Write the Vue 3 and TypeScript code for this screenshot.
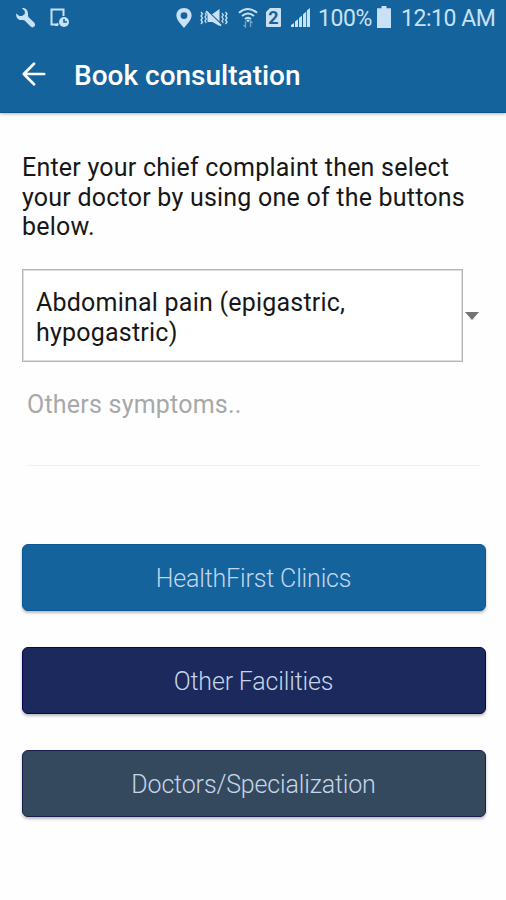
<script setup lang="ts">
import { ref } from 'vue'

interface Destination {
  label: string
  tone: string
}

const complaint = ref('Abdominal pain (epigastric, hypogastric)')
const symptoms = ref('')
const destinations: Destination[] = [
  { label: 'HealthFirst Clinics', tone: 'blue' },
  { label: 'Other Facilities', tone: 'navy' },
  { label: 'Doctors/Specialization', tone: 'slate' },
]
</script>

<template>
  <div class="screen">
    <header class="top">
      <div class="status">
        <svg class="wrench" width="22" height="22" viewBox="0 0 22 22">
          <path d="M6.8 1 9.8 4V7L7 9H4.4L1.2 6.4C.6 10.4 3.4 13.6 7.4 13Q8.6 12.8 9.6 13.4L15.6 19.6Q17.4 21.2 19.4 19.6Q21 17.8 19.4 15.8L13.4 10Q12.8 9 13 7.2C13.2 3 10.4.4 6.8 1Z" />
        </svg>
        <svg class="device" width="20" height="20" viewBox="0 0 20 20">
          <path class="line" d="M8.5 16.5H1.5V1.5H13.5V8" />
          <circle cx="14" cy="14" r="5" />
          <path class="cut" d="M14 11V14H17" />
          <path d="M4.5 18 8 14.5V18Z" />
        </svg>
        <svg class="pin" width="16" height="20" viewBox="0 0 16 20">
          <path fill-rule="evenodd" d="M8 0C3.5 0 .4 3.2.4 7.4.4 12 5 16 8 20 11 16 15.6 12 15.6 7.4 15.6 3.2 12.5 0 8 0ZM8 4.2A3.4 3.4 0 1 1 8 11 3.4 3.4 0 0 1 8 4.2Z" />
        </svg>
        <svg class="mute" width="28" height="20" viewBox="0 0 28 20">
          <path class="thin" d="M1 4 2.5 6 1 8 2.5 10 1 12 2.5 14 1 16M5 5 6.3 7 5 9 6.3 11 5 13 6.3 15M22 5 23.3 7 22 9 23.3 11 22 13 23.3 15M25.5 4 27 6 25.5 8 27 10 25.5 12 27 14 25.5 16" />
          <path d="M7.5 6H12.5L19.5 1V18L12.5 14H7.5Z" />
          <path class="cut" d="M7 2.6 21.4 16.4" />
          <path class="line" d="M6 3.2 21 17.6" />
        </svg>
        <svg class="wifi" width="20" height="21" viewBox="0 0 20 21">
          <path class="line" d="M1 5.7Q10-1.8 19 5.7M4 9Q10 4 16 9M7 12Q10 9.5 13 12" />
          <path d="M8.2 13.2Q10 12 11.8 13.2L10 15.5Z" />
          <path class="faint" d="M7.5 14V20L5.5 18M12.5 20V14L14.5 16" />
        </svg>
        <span class="sim">2</span>
        <svg class="signal" width="19" height="19" viewBox="0 0 19 19">
          <path d="M0 19V17L3 15V19ZM4 19V13.5L7 11.2V19ZM8 19V10L11 7.5V19ZM12 19V6.3L15 3.8V19ZM15.8 19V2.5L19 0V19Z" />
        </svg>
        <span class="percent">100%</span>
        <svg class="battery" width="14" height="22" viewBox="0 0 14 22">
          <path d="M4.5 0H9.5V2.2H14V22H0V2.2H4.5Z" />
        </svg>
        <span class="clock">12:10 AM</span>
      </div>
      <div class="bar">
        <button class="back" type="button">
          <svg width="24" height="24" viewBox="0 0 24 24"><path d="M22.2 12H2M12 1.7 1.8 12 12 22.3" /></svg>
        </button>
        <h1>Book consultation</h1>
      </div>
    </header>

    <main>
      <p class="intro">Enter your chief complaint then select<br>your doctor by using one of the buttons<br>below.</p>
      <div class="select">
        <div class="value">{{ complaint }}</div>
        <svg width="14" height="8" viewBox="0 0 14 8"><path d="M0 0H14L7 8Z" /></svg>
      </div>
      <input v-model="symptoms" class="symptoms" type="text" placeholder="Others symptoms..">
      <div class="actions">
        <button v-for="d in destinations" :key="d.label" type="button" :class="['action', d.tone]"><span>{{ d.label }}</span></button>
      </div>
    </main>
  </div>
</template>

<style>
body {
  background: #fefefe;
}
</style>

<style scoped>
.screen {
  height: 900px;
  background: #fefefe;
  font-family: Roboto, "Liberation Sans", sans-serif;
  color: #171717;
  overflow: hidden;
}
.top {
  height: 113px;
  box-sizing: border-box;
  background: #14639c;
  border-bottom: 1px solid #0d558c;
  box-shadow: 0 1px 3px rgba(0, 0, 0, 0.3);
}
.status {
  display: flex;
  align-items: center;
  height: 35px;
  color: #c8e1f5;
  font-size: 23px;
  line-height: 35px;
  letter-spacing: -0.45px;
  white-space: nowrap;
}
svg {
  display: block;
  flex: none;
  fill: currentColor;
}
.line, .thin, .cut, .faint {
  fill: none;
  stroke: currentColor;
  stroke-width: 2;
}
.thin { stroke-width: 1.3; }
.cut { stroke: #14639c; stroke-width: 1.6; }
.faint { stroke-width: 1.4; opacity: 0.5; }
.wrench { margin-left: 15px; }
.device { margin-left: 13px; }
.pin { margin-left: 106px; }
.mute { margin-left: 8px; }
.wifi { margin-left: 10px; }
.sim {
  width: 15px;
  height: 19px;
  margin-left: 8px;
  border-radius: 1px;
  background: #c8e1f5;
  color: #14639c;
  font-size: 18px;
  font-weight: 700;
  line-height: 20px;
  letter-spacing: 0;
  text-align: center;
  clip-path: polygon(4px 0, 100% 0, 100% 100%, 0 100%, 0 4px);
}
.signal { margin-left: 10px; }
.percent {
  width: 59px;
  margin-left: 8px;
  padding-top: 2px;
  box-sizing: border-box;
}
.battery { margin-top: -2px; }
.clock { margin-left: 10px; padding-top: 2px; }
.bar {
  display: flex;
  align-items: center;
  height: 78px;
  color: #fff;
}
.back {
  margin: 0 0 1px 22px;
  padding: 0;
  border: 0;
  background: none;
  color: inherit;
}
.back path {
  fill: none;
  stroke: currentColor;
  stroke-width: 2.7;
  stroke-linecap: round;
  stroke-linejoin: round;
}
h1 {
  margin: 3px 0 0 28px;
  font-size: 28px;
  font-weight: 500;
  line-height: 32px;
  white-space: nowrap;
}
main {
  padding: 40px 20px 0 22px;
}
.intro {
  margin: 0;
  font-size: 25px;
  line-height: 29.5px;
  letter-spacing: 0.22px;
  white-space: nowrap;
}
.select {
  display: flex;
  align-items: center;
  margin-top: 27.5px;
  color: #737373;
}
.value {
  width: 441px;
  height: 93px;
  box-sizing: border-box;
  padding: 18px 60px 0 13px;
  border: 1px solid #b5b5b5;
  box-shadow: inset 0 0 0 1px #dedede;
  background: #fff;
  color: #171717;
  font-size: 25px;
  line-height: 29.5px;
  letter-spacing: 0.22px;
}
.select svg { margin-left: 2px; }
.symptoms {
  display: block;
  width: 453px;
  height: 92px;
  margin: 11.5px 0 0 5px;
  padding: 0 0 30px;
  box-sizing: border-box;
  border: 0;
  border-bottom: 1px solid #f1f1f1;
  outline: 0;
  background: none;
  font: 25px Roboto, "Liberation Sans", sans-serif;
  letter-spacing: 0.22px;
}
.symptoms::placeholder {
  color: #a8a8a8;
  opacity: 1;
}
.actions {
  display: grid;
  gap: 36px;
  margin: 78px 1px 0 0;
  margin-right: 0;
}
.action {
  height: 67px;
  padding: 3px 1px 0 0;
  border: 1px solid;
  border-radius: 6px;
  box-shadow: 0 2px 3px rgba(0, 0, 0, 0.27);
  color: #c4d6ea;
  font: 300 25px Roboto, "Liberation Sans", sans-serif;
  letter-spacing: -0.16px;
}
.blue { background: #14639c; border-color: #0c5795; }
.navy { background: #1b295d; border-color: #09064f; }
.slate { background: #34495e; border-color: #171f50; }
</style>
